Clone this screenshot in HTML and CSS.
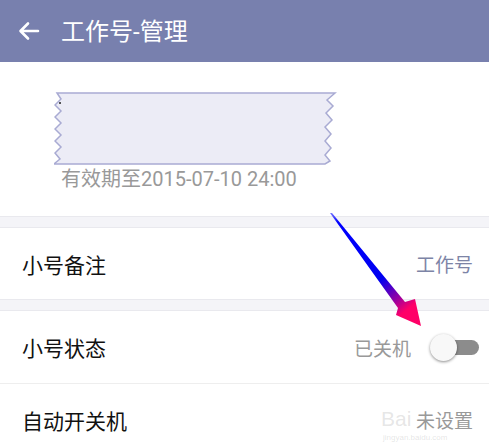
FILE: index.html
```html
<!DOCTYPE html>
<html lang="zh-CN">
<head>
    <meta charset="UTF-8">
    <title>工作号-管理</title>
    <link rel="stylesheet" href="styles.css">
</head>
<body>

<div id="screen">
    <div class="appbar">
        <svg class="back" width="24" height="24" viewBox="0 0 24 24">
            <path d="M21 12H4M11 4.5L3.5 12L11 19.5" fill="none" stroke="#fff" stroke-width="2.6" stroke-linecap="round" stroke-linejoin="round"/>
        </svg>
        <span class="title">工作号-管理</span>
    </div>

    <div class="info">
        <svg class="ticket" width="284" height="74" viewBox="0 0 284 74">
            <polygon fill="#ececf6" stroke="#a9abd3" stroke-width="1.5"
                points="3,1 281,1 273,8 279,14 272,21 278,28 271,35 277,42 271,49 277,56 271,63 276,69 271,72
                        0,72 6,67 1,61 7,55 1,49 7,43 1,37 7,31 1,25 7,19 1,13 7,7"/>
            <circle cx="6" cy="11" r="1" fill="#222"/>
        </svg>
        <div class="expire">有效期至2015-07-10 24:00</div>
    </div>

    <div class="gap"></div>

    <div class="row">
        <span class="label">小号备注</span>
        <span class="value link">工作号</span>
    </div>

    <div class="gap"></div>

    <div class="row line">
        <span class="label">小号状态</span>
        <div class="right">
            <span class="value">已关机</span>
            <div class="switch"><div class="thumb"></div></div>
        </div>
    </div>

    <div class="row">
        <span class="label">自动开关机</span>
        <span class="value">未设置</span>
    </div>

    <span class="wm-big">Bai</span>
    <span class="wm-small">jingyan.baidu.com</span>

    <svg class="arrow" width="489" height="443" viewBox="0 0 489 443">
        <defs>
            <linearGradient id="arrowGrad" x1="331" y1="213" x2="420" y2="325" gradientUnits="userSpaceOnUse">
                <stop offset="0" stop-color="#7a7aff"/>
                <stop offset="0.08" stop-color="#0000ff"/>
                <stop offset="0.58" stop-color="#0000f0"/>
                <stop offset="0.76" stop-color="#9a00a0"/>
                <stop offset="0.86" stop-color="#ff0068"/>
                <stop offset="1" stop-color="#ff0066"/>
            </linearGradient>
        </defs>
        <polygon fill="url(#arrowGrad)" points="330,213 332,213 405,302 415,299 421,326 396,315 398,308"/>
    </svg>
</div>

</body>
</html>
```

FILE: styles.css
```css
body {
    margin: 0;
    font-family: Roboto, "Noto Sans CJK SC", sans-serif;
    background: #fff;
}

#screen {
    position: relative;
    width: 489px;
    height: 443px;
    overflow: hidden;
}

.appbar {
    height: 62px;
    background-color: #7880ae;
    display: flex;
    align-items: center;
    padding-left: 17px;
    box-sizing: border-box;
}
.back { margin-top: -1px; }
.title {
    color: #fff;
    font-size: 24px;
    margin-left: 20px;
    margin-top: -3px;
}

.info {
    height: 154px;
    box-sizing: border-box;
    padding-top: 30px;
    padding-left: 54px;
}
.ticket { display: block; }
.expire {
    color: #999;
    font-size: 20px;
    margin-left: 7px;
    margin-top: 0;
    line-height: 26px;
}

.gap {
    height: 10px;
    background-color: #f4f4f8;
    border-top: 1px solid #e9e9ee;
    border-bottom: 1px solid #e9e9ee;
}

.row {
    height: 71px;
    display: flex;
    align-items: center;
    justify-content: space-between;
    padding: 0 16px 0 22px;
}
.row.line {
    height: 72px;
    border-bottom: 1px solid #eeeeee;
}
.label {
    font-size: 21px;
    color: #111;
}
.value {
    font-size: 19px;
    color: #999;
}
.value.link { color: #7d84a6; }

.right {
    display: flex;
    align-items: center;
}
.switch {
    position: relative;
    width: 34px;
    height: 15px;
    border-radius: 8px;
    background-color: #8c8c8c;
    margin-left: 34px;
    margin-right: -6px;
}
.thumb {
    position: absolute;
    left: -15px;
    top: -6px;
    width: 27px;
    height: 27px;
    border-radius: 50%;
    background: #f8f8f8;
    box-shadow: 0 1px 3px rgba(0, 0, 0, 0.45);
}

/* faint site watermark in the corner */
.wm-big, .wm-small {
    position: absolute;
    color: rgba(170, 170, 170, 0.3);
    line-height: 1;
    font-family: "Liberation Sans", sans-serif;
}
.wm-big {
    left: 381px;
    top: 408px;
    font-size: 21px;
}
.wm-small {
    left: 383px;
    top: 434px;
    font-size: 8px;
}

.arrow {
    position: absolute;
    left: 0;
    top: 0;
    pointer-events: none;
}
```
